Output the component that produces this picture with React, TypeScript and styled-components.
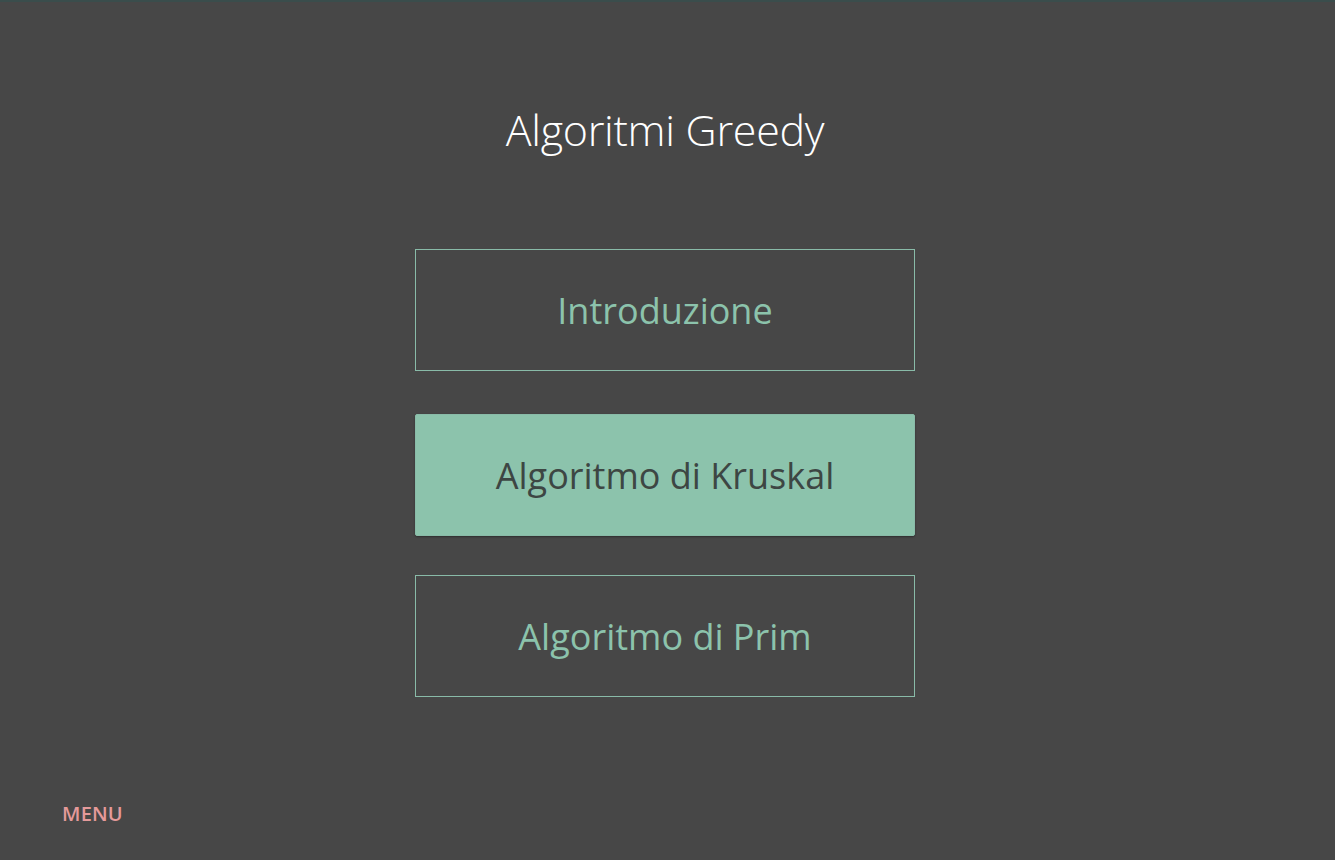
import React from 'react';
import styled, { createGlobalStyle } from 'styled-components';

const GlobalStyle = createGlobalStyle`
  html, body {
    margin: 0;
    padding: 0;
    background: #474747;
  }
  body {
    font-family: 'Open Sans', 'Noto Sans', sans-serif;
  }
`;

const Page = styled.div`
  position: relative;
  height: 860px;
  box-sizing: border-box;
  border-top: 2px solid #3a4d4c;
  padding-right: 5px;
  display: flex;
  flex-direction: column;
  align-items: center;
`;

const Title = styled.h1`
  margin: 100px 0 0;
  font-size: 43px;
  font-weight: 300;
  line-height: 56px;
  color: #ffffff;
  letter-spacing: -0.3px;
`;

const MenuList = styled.nav`
  margin-top: 91px;
  display: flex;
  flex-direction: column;
  gap: 41px;
`;

const MenuButton = styled.button<{ $active?: boolean }>`
  position: relative;
  top: ${(p) => (p.$active ? '2px' : '0')};
  width: 500px;
  height: 122px;
  box-sizing: border-box;
  border: 1px solid #89bba8;
  border-radius: ${(p) => (p.$active ? '2px' : '0')};
  background: ${(p) => (p.$active ? '#8cc3ac' : 'transparent')};
  color: ${(p) => (p.$active ? '#3d4643' : '#8cc3ac')};
  box-shadow: ${(p) => (p.$active ? '0 1px 2px rgba(0,0,0,0.35)' : 'none')};
  font-family: 'Open Sans', 'Noto Sans', sans-serif;
  font-size: 36px;
  font-weight: 400;
  letter-spacing: 0;
  cursor: pointer;
`;

const MenuLink = styled.a`
  position: absolute;
  left: 62px;
  bottom: 33px;
  font-size: 20px;
  font-weight: 600;
  color: #e59a9a;
  text-decoration: none;
  letter-spacing: 0.2px;
`;

const App: React.FC = () => {
  return (
    <>
      <GlobalStyle />
      <Page>
        <Title>Algoritmi Greedy</Title>
        <MenuList>
          <MenuButton>Introduzione</MenuButton>
          <MenuButton $active>Algoritmo di Kruskal</MenuButton>
          <MenuButton>Algoritmo di Prim</MenuButton>
        </MenuList>
        <MenuLink href="#">MENU</MenuLink>
      </Page>
    </>
  );
};

export default App;
